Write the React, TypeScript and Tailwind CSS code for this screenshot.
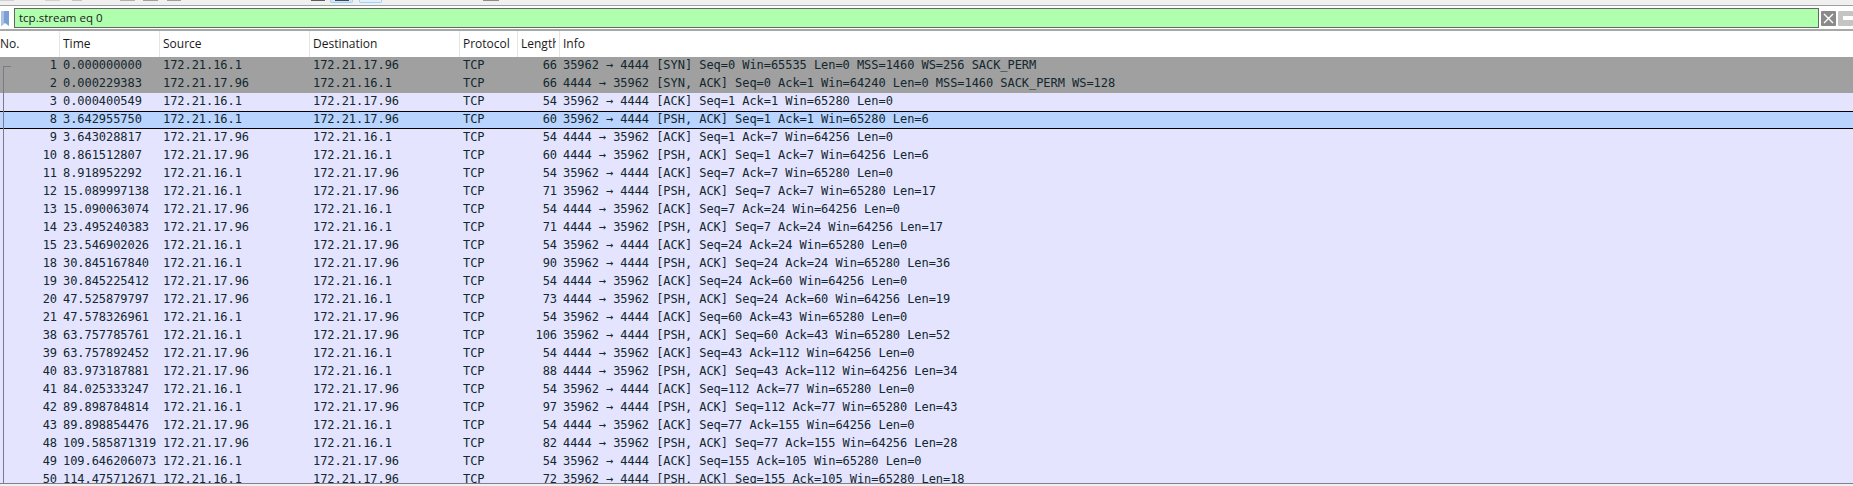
const rows: [number, string, string, string, number, string][] = [
  [1, "0.000000000", "172.21.16.1", "172.21.17.96", 66, "35962 → 4444 [SYN] Seq=0 Win=65535 Len=0 MSS=1460 WS=256 SACK_PERM"],
  [2, "0.000229383", "172.21.17.96", "172.21.16.1", 66, "4444 → 35962 [SYN, ACK] Seq=0 Ack=1 Win=64240 Len=0 MSS=1460 SACK_PERM WS=128"],
  [3, "0.000400549", "172.21.16.1", "172.21.17.96", 54, "35962 → 4444 [ACK] Seq=1 Ack=1 Win=65280 Len=0"],
  [8, "3.642955750", "172.21.16.1", "172.21.17.96", 60, "35962 → 4444 [PSH, ACK] Seq=1 Ack=1 Win=65280 Len=6"],
  [9, "3.643028817", "172.21.17.96", "172.21.16.1", 54, "4444 → 35962 [ACK] Seq=1 Ack=7 Win=64256 Len=0"],
  [10, "8.861512807", "172.21.17.96", "172.21.16.1", 60, "4444 → 35962 [PSH, ACK] Seq=1 Ack=7 Win=64256 Len=6"],
  [11, "8.918952292", "172.21.16.1", "172.21.17.96", 54, "35962 → 4444 [ACK] Seq=7 Ack=7 Win=65280 Len=0"],
  [12, "15.089997138", "172.21.16.1", "172.21.17.96", 71, "35962 → 4444 [PSH, ACK] Seq=7 Ack=7 Win=65280 Len=17"],
  [13, "15.090063074", "172.21.17.96", "172.21.16.1", 54, "4444 → 35962 [ACK] Seq=7 Ack=24 Win=64256 Len=0"],
  [14, "23.495240383", "172.21.17.96", "172.21.16.1", 71, "4444 → 35962 [PSH, ACK] Seq=7 Ack=24 Win=64256 Len=17"],
  [15, "23.546902026", "172.21.16.1", "172.21.17.96", 54, "35962 → 4444 [ACK] Seq=24 Ack=24 Win=65280 Len=0"],
  [18, "30.845167840", "172.21.16.1", "172.21.17.96", 90, "35962 → 4444 [PSH, ACK] Seq=24 Ack=24 Win=65280 Len=36"],
  [19, "30.845225412", "172.21.17.96", "172.21.16.1", 54, "4444 → 35962 [ACK] Seq=24 Ack=60 Win=64256 Len=0"],
  [20, "47.525879797", "172.21.17.96", "172.21.16.1", 73, "4444 → 35962 [PSH, ACK] Seq=24 Ack=60 Win=64256 Len=19"],
  [21, "47.578326961", "172.21.16.1", "172.21.17.96", 54, "35962 → 4444 [ACK] Seq=60 Ack=43 Win=65280 Len=0"],
  [38, "63.757785761", "172.21.16.1", "172.21.17.96", 106, "35962 → 4444 [PSH, ACK] Seq=60 Ack=43 Win=65280 Len=52"],
  [39, "63.757892452", "172.21.17.96", "172.21.16.1", 54, "4444 → 35962 [ACK] Seq=43 Ack=112 Win=64256 Len=0"],
  [40, "83.973187881", "172.21.17.96", "172.21.16.1", 88, "4444 → 35962 [PSH, ACK] Seq=43 Ack=112 Win=64256 Len=34"],
  [41, "84.025333247", "172.21.16.1", "172.21.17.96", 54, "35962 → 4444 [ACK] Seq=112 Ack=77 Win=65280 Len=0"],
  [42, "89.898784814", "172.21.16.1", "172.21.17.96", 97, "35962 → 4444 [PSH, ACK] Seq=112 Ack=77 Win=65280 Len=43"],
  [43, "89.898854476", "172.21.17.96", "172.21.16.1", 54, "4444 → 35962 [ACK] Seq=77 Ack=155 Win=64256 Len=0"],
  [48, "109.585871319", "172.21.17.96", "172.21.16.1", 82, "4444 → 35962 [PSH, ACK] Seq=77 Ack=155 Win=64256 Len=28"],
  [49, "109.646206073", "172.21.16.1", "172.21.17.96", 54, "35962 → 4444 [ACK] Seq=155 Ack=105 Win=65280 Len=0"],
  [50, "114.475712671", "172.21.16.1", "172.21.17.96", 72, "35962 → 4444 [PSH, ACK] Seq=155 Ack=105 Win=65280 Len=18"],
];

const columns = "grid grid-cols-[59px_100px_150px_150px_58px_42px_1fr]";

function HeaderCell({ label, first }: { label: string; first?: boolean }) {
  return (
    <div className={first ? "overflow-hidden" : "overflow-hidden border-l border-[#e5e5e5] pl-[3px] pr-[3px]"}>
      <span className="block h-full leading-[26px] overflow-hidden whitespace-nowrap">{label}</span>
    </div>
  );
}

function Toolbar() {
  return (
    <div className="h-[6px] shrink-0 bg-[#f0f0f0] border-b border-[#a0a0a0] flex items-start">
      <div className="ml-0 w-[14px] h-px bg-[#d0d0d0]" />
      <div className="ml-[31px] w-[15px] h-px bg-[#d0d0d0]" />
      <div className="ml-[12px] w-[10px] h-px bg-[#c4c4c4]" />
      <div className="ml-[38px] w-[15px] h-px bg-[#b0b0b0]" />
      <div className="ml-[8px] w-[15px] h-px bg-[#a0a0a0]" />
      <div className="ml-[9px] w-[14px] h-px bg-[#a0a0a0]" />
      <div className="ml-[130px] w-[14px] h-px bg-[#5c5c5c]" />
      <div className="ml-[5px] w-[23px] h-[3px] bg-[#cfe6fb] border-b border-x border-[#a3d0f5] rounded-b-[2px] flex justify-center">
        <div className="w-[14px] h-px bg-[#3c4a5c]" />
      </div>
      <div className="ml-[6px] w-[23px] h-[3px] bg-[#e2f0fc] border-b border-x border-[#a3d0f5] rounded-b-[2px]" />
      <div className="ml-[101px] w-[16px] h-px bg-[#8c8c8c]" />
    </div>
  );
}

function FilterBar() {
  return (
    <div className="h-[23px] shrink-0 bg-white flex items-start border-b-2 border-[#a8a8a8]">
      <div className="w-[14px] h-[20px] flex items-center pl-px">
        <svg width="8" height="15" viewBox="0 0 8 15">
          <path d="M0 0H8V15L4 12L0 15Z" fill="#7b9fd4" />
          <path d="M0 0H3V13L0 15Z" fill="#a9c2e6" />
        </svg>
      </div>
      <div className="flex-1 h-[20px] bg-[#afffaf] border-y border-l border-[#666666] pl-[4px] text-[11.5px] leading-[17px] text-[#1a1a1a]">
        tcp.stream eq 0
      </div>
      <div className="w-[35px] h-[20px] border-l border-[#666666] flex items-center pl-[2px] gap-[2px] overflow-hidden">
        <svg width="15" height="15" viewBox="0 0 15 15" className="shrink-0">
          <rect width="15" height="15" rx="1" fill="#8a8a8a" />
          <path d="M3 3L12 12M12 3L3 12" stroke="#ffffff" strokeWidth="1.4" />
        </svg>
        <svg width="15" height="15" viewBox="0 0 15 15" className="shrink-0">
          <rect width="15" height="15" rx="1" fill="#c4c4c4" />
          <rect x="5" y="5" width="10" height="4" fill="#ffffff" />
        </svg>
      </div>
    </div>
  );
}

function PacketRow({ row, index }: { row: (typeof rows)[number]; index: number }) {
  const [no, time, src, dst, len, info] = row;
  const bg =
    index < 2
      ? "bg-[#a0a0a0]"
      : no === 8
        ? "bg-[#b8d4ff] shadow-[inset_0_1px_0_#000000,inset_0_-1px_0_#000000]"
        : "bg-[#e4e4ff]";
  return (
    <div className={`${columns} ${bg} h-[18px] leading-[16px] whitespace-pre items-start`}>
      <div className="text-right pr-[2px]">{no}</div>
      <div className="pl-[4px]">{time}</div>
      <div className="pl-[4px]">{src}</div>
      <div className="pl-[4px]">{dst}</div>
      <div className="pl-[4px]">TCP</div>
      <div className="text-right pr-[2px]">{len}</div>
      <div className="pl-[4px]">{info}</div>
    </div>
  );
}

export default function App() {
  return (
    <div className="h-[486px] w-[1853px] overflow-hidden bg-[#f0f0f0] flex flex-col font-['Open_Sans',sans-serif]">
      <Toolbar />
      <div className="h-[2px] shrink-0 bg-white" />
      <FilterBar />
      <div className={`${columns} h-[26px] shrink-0 bg-white text-[12px] text-[#1a1a1a]`}>
        <HeaderCell label="No." first />
        <HeaderCell label="Time" />
        <HeaderCell label="Source" />
        <HeaderCell label="Destination" />
        <HeaderCell label="Protocol" />
        <HeaderCell label="Length" />
        <HeaderCell label="Info" />
      </div>
      <div className="relative h-[427px] shrink-0 overflow-hidden border-b border-[#808090] font-['DejaVu_Sans_Mono',monospace] text-[12px] tracking-[-0.055px] text-[#12272e]">
        {rows.map((row, i) => (
          <PacketRow key={row[0]} row={row} index={i} />
        ))}
        {/* conversation bracket in the No. column */}
        <div className="absolute left-[3px] top-[9px] bottom-0 w-[8px] border-l border-t border-[#7a7a8a]" />
      </div>
    </div>
  );
}
